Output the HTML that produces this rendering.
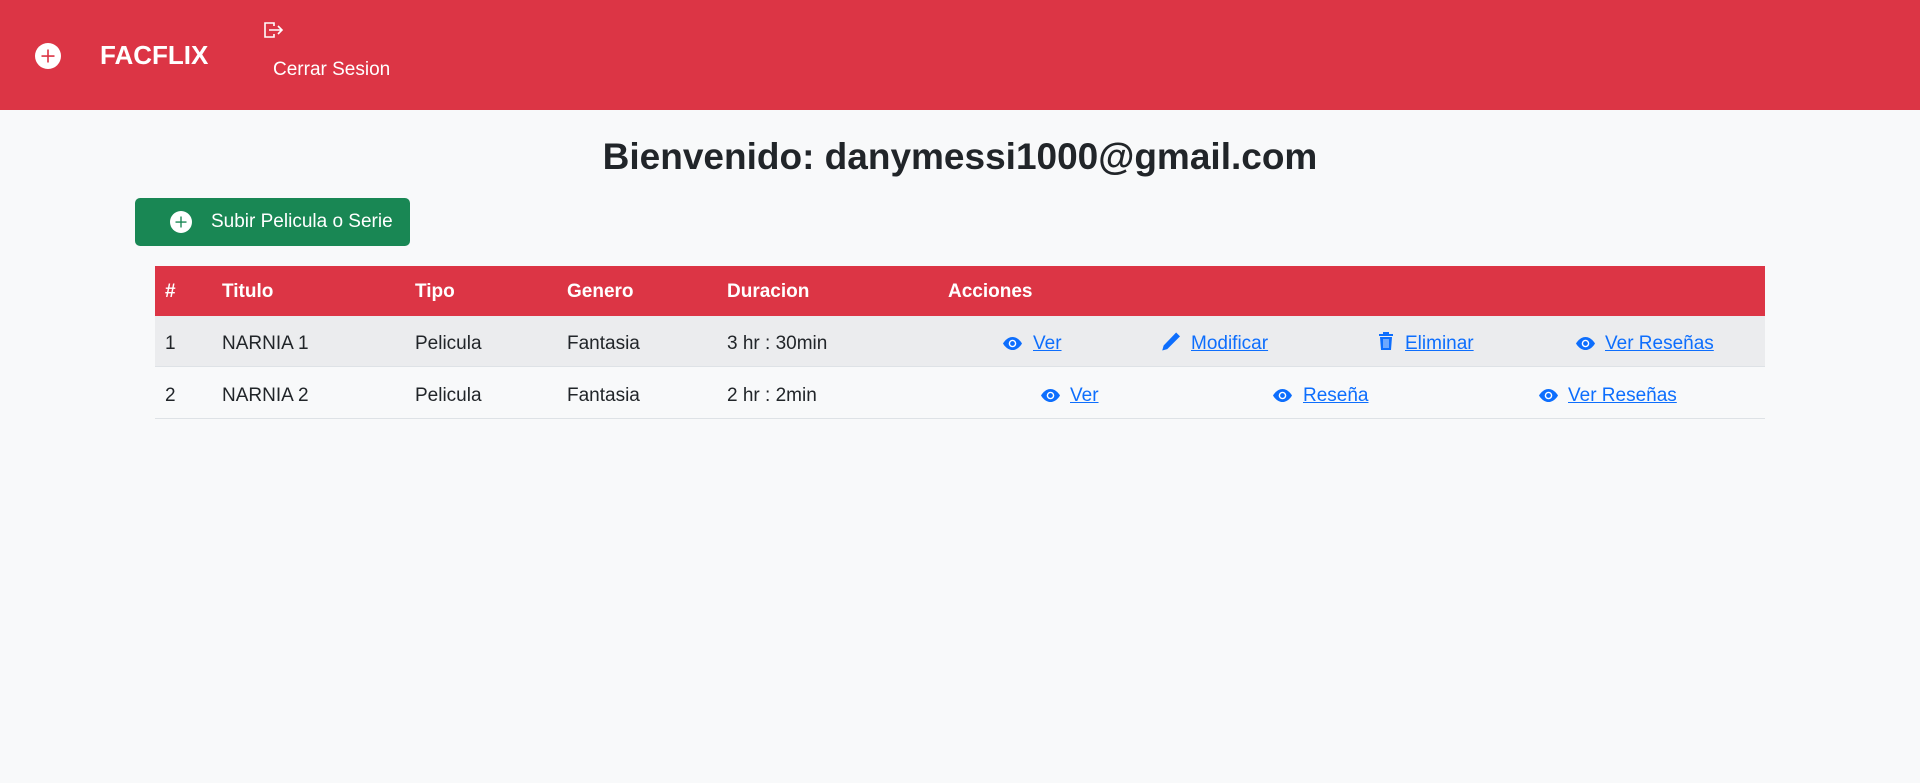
<!DOCTYPE html>
<html><head><meta charset="utf-8"><style>
*{margin:0;padding:0;box-sizing:border-box}
body{width:1920px;height:783px;background:#f8f9fa;font-family:"Liberation Sans",sans-serif;color:#212529;position:relative;overflow:hidden;font-size:19px}
.a{position:absolute;white-space:nowrap}
nav{position:absolute;left:0;top:0;width:1920px;height:110px;background:#dc3545}
.lnk{color:#0d6efd;text-decoration:underline}
.ic{position:absolute}
</style></head><body>
<nav>
<svg class="ic" style="left:35px;top:43px" width="26" height="26" viewBox="0 0 16 16"><circle cx="8" cy="8" r="8" fill="#fff"/><path d="M8 4v8M4 8h8" stroke="#dc3545" stroke-width="1"/></svg>
<div class="a" style="left:100px;top:40px;font-size:26px;font-weight:bold;color:#fff">FACFLIX</div>
<svg class="ic" style="left:263px;top:21px" width="21" height="18" viewBox="0 0 21 18" fill="none" stroke="#fff" stroke-width="1.6"><path d="M11 5V2H2v14h9v-3"/><path d="M6 9h13M15 5l4 4-4 4"/></svg>
<div class="a" style="left:273px;top:59px;font-size:19px;color:#fff">Cerrar Sesion</div>
</nav>
<div class="a" style="left:0;width:1920px;text-align:center;top:136px;font-size:37px;font-weight:bold">Bienvenido: danymessi1000@gmail.com</div>
<div class="a" style="left:135px;top:198px;width:275px;height:48px;background:#198754;border-radius:5px"></div>
<svg class="ic" style="left:170px;top:211px" width="22" height="22" viewBox="0 0 16 16"><circle cx="8" cy="8" r="8" fill="#fff"/><path d="M8 4v8M4 8h8" stroke="#198754" stroke-width="1"/></svg>
<div class="a" style="left:211px;top:211px;font-size:19px;color:#fff">Subir Pelicula o Serie</div>

<div class="a" style="left:155px;top:266px;width:1610px;height:50px;background:#dc3545"></div>
<div class="a" style="left:155px;top:316px;width:1610px;height:51px;background:#ebecee;border-bottom:1px solid #dee2e6"></div>
<div class="a" style="left:155px;top:367px;width:1610px;height:52px;border-bottom:1px solid #dee2e6"></div>
<div style="color:#fff;font-weight:bold;font-size:19px">
<div class="a" style="left:165px;top:281px">#</div>
<div class="a" style="left:222px;top:281px">Titulo</div>
<div class="a" style="left:415px;top:281px">Tipo</div>
<div class="a" style="left:567px;top:281px">Genero</div>
<div class="a" style="left:727px;top:281px">Duracion</div>
<div class="a" style="left:948px;top:281px">Acciones</div>
</div>
<div class="a" style="left:165px;top:333px">1</div>
<div class="a" style="left:222px;top:333px">NARNIA 1</div>
<div class="a" style="left:415px;top:333px">Pelicula</div>
<div class="a" style="left:567px;top:333px">Fantasia</div>
<div class="a" style="left:727px;top:333px">3 hr : 30min</div>
<div class="a" style="left:165px;top:385px">2</div>
<div class="a" style="left:222px;top:385px">NARNIA 2</div>
<div class="a" style="left:415px;top:385px">Pelicula</div>
<div class="a" style="left:567px;top:385px">Fantasia</div>
<div class="a" style="left:727px;top:385px">2 hr : 2min</div>

<svg width="0" height="0" style="position:absolute"><defs><symbol id="eye" viewBox="0 0 16 16"><path d="M0 8s3-5.5 8-5.5S16 8 16 8s-3 5.5-8 5.5S0 8 0 8z" fill="#0d6efd"/><circle cx="8" cy="8" r="3.2" fill="#fff"/><circle cx="8" cy="8" r="2" fill="#0d6efd"/></symbol></defs></svg>
<svg class="ic" style="left:1003px;top:334px" width="19" height="19"><use href="#eye"/></svg>
<div class="a lnk" style="left:1033px;top:333px">Ver</div>
<svg class="ic" style="left:1161px;top:331px" width="20" height="21" viewBox="0 0 16 16"><path d="M12.1.8l3.1 3.1L5 14.1 1 15.2l1.1-4z" fill="#0d6efd"/></svg>
<div class="a lnk" style="left:1191px;top:333px">Modificar</div>
<svg class="ic" style="left:1378px;top:331px" width="16" height="20" viewBox="0 0 16 20"><path d="M1 3h14v2H1zM5 1h6v2H5zM2 6h12l-1 13H3z" fill="#0d6efd"/><path d="M6 8v9M8 8v9M10 8v9" stroke="#fff" stroke-width=".8"/></svg>
<div class="a lnk" style="left:1405px;top:333px">Eliminar</div>
<svg class="ic" style="left:1576px;top:334px" width="19" height="19"><use href="#eye"/></svg>
<div class="a lnk" style="left:1605px;top:333px">Ver Reseñas</div>

<svg class="ic" style="left:1041px;top:386px" width="19" height="19"><use href="#eye"/></svg>
<div class="a lnk" style="left:1070px;top:385px">Ver</div>
<svg class="ic" style="left:1273px;top:386px" width="19" height="19"><use href="#eye"/></svg>
<div class="a lnk" style="left:1303px;top:385px">Reseña</div>
<svg class="ic" style="left:1539px;top:386px" width="19" height="19"><use href="#eye"/></svg>
<div class="a lnk" style="left:1568px;top:385px">Ver Reseñas</div>
</body></html>
